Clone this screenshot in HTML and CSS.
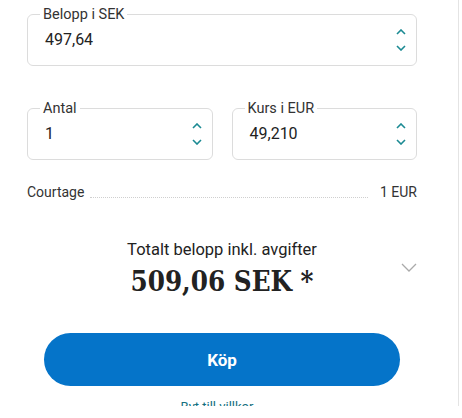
FILE: index.html
```html
<!DOCTYPE html>
<html lang="sv">
<head>
  <meta charset="UTF-8" />
  <title>Köp</title>
  <link rel="stylesheet" href="styles.css">
</head>
<body>
  <div class="panel">
    <fieldset class="field">
      <legend>Belopp i SEK</legend>
      <div class="value">497,64</div>
      <div class="spinner">
        <svg width="10" height="6" viewBox="0 0 10 6"><path d="M1 5 L5 1 L9 5" /></svg>
        <svg width="10" height="6" viewBox="0 0 10 6"><path d="M1 1 L5 5 L9 1" /></svg>
      </div>
    </fieldset>

    <div class="row">
      <fieldset class="field">
        <legend>Antal</legend>
        <div class="value">1</div>
        <div class="spinner">
          <svg width="10" height="6" viewBox="0 0 10 6"><path d="M1 5 L5 1 L9 5" /></svg>
          <svg width="10" height="6" viewBox="0 0 10 6"><path d="M1 1 L5 5 L9 1" /></svg>
        </div>
      </fieldset>
      <fieldset class="field">
        <legend>Kurs i EUR</legend>
        <div class="value">49,210</div>
        <div class="spinner">
          <svg width="10" height="6" viewBox="0 0 10 6"><path d="M1 5 L5 1 L9 5" /></svg>
          <svg width="10" height="6" viewBox="0 0 10 6"><path d="M1 1 L5 5 L9 1" /></svg>
        </div>
      </fieldset>
    </div>

    <div class="fee">
      <span>Courtage</span>
      <span class="dots"></span>
      <span>1 EUR</span>
    </div>

    <div class="total">
      <div class="total-label">Totalt belopp inkl. avgifter</div>
      <div class="total-amount">509,06 SEK *</div>
      <svg class="expand" width="16" height="9" viewBox="0 0 16 9"><path d="M1 1 L8 8 L15 1" /></svg>
    </div>

    <button class="buy">Köp</button>
    <div class="link">Byt till villkor</div>
  </div>
</body>
</html>
```

FILE: styles.css
```css
body {
  margin: 0;
  background: #fff;
  font-family: Roboto, 'Liberation Sans', sans-serif;
  color: #222;
  overflow: hidden;
}

.panel {
  width: 459px;
  height: 406px;
  overflow: hidden;
  box-sizing: border-box;
  border-right: 1px solid #e4e4e4;
  padding: 7px 41px 0 27px;
}

.field {
  position: relative;
  margin: 0;
  padding: 0 12px;
  height: 59px;
  box-sizing: border-box;
  border: 1px solid #dcdcdc;
  border-radius: 6px;
  display: flex;
  align-items: center;
  min-width: 0;
}

.field legend {
  padding: 0 3px;
  font-size: 14.5px;
  line-height: 15px;
  color: #333;
}

.value {
  flex: 1;
  padding-left: 5px;
  padding-bottom: 8px;
  font-size: 16px;
}

.spinner {
  display: flex;
  flex-direction: column;
  gap: 10px;
  padding-bottom: 7px;
  margin-right: -2px;
}

.spinner svg path {
  fill: none;
  stroke: #1b8a93;
  stroke-width: 1.6;
}

.row {
  display: grid;
  grid-template-columns: 1fr 1fr;
  gap: 19px;
  margin-top: 35px;
}

.fee {
  display: flex;
  align-items: flex-end;
  gap: 6px;
  margin-top: 24px;
  font-size: 14px;
  color: #333;
}

.dots {
  flex: 1;
  border-bottom: 1px dotted #cfcfcf;
  margin: 0 6px 2px 0;
}

.total {
  position: relative;
  text-align: center;
  margin-top: 40px;
}

.total-label {
  font-size: 16.5px;
  color: #222;
}

.total-amount {
  font-family: 'DejaVu Serif Condensed', 'DejaVu Serif', serif;
  font-weight: bold;
  font-size: 27.5px;
  line-height: 36px;
  color: #222;
  margin-top: 4px;
  margin-bottom: -2px;
}

.expand {
  position: absolute;
  right: 0;
  top: 23px;
}

.expand path {
  fill: none;
  stroke: #aaa;
  stroke-width: 1.3;
}

.buy {
  display: block;
  width: 356px;
  height: 53px;
  margin: 36px 0 0 17px;
  border: none;
  border-radius: 27px;
  background: #0574c9;
  color: #fff;
  font-family: Roboto, 'Liberation Sans', sans-serif;
  font-weight: bold;
  font-size: 17px;
}

.link {
  margin-top: 13px;
  text-align: center;
  font-size: 13px;
  color: #136f80;
  padding-right: 10px;
}
```
